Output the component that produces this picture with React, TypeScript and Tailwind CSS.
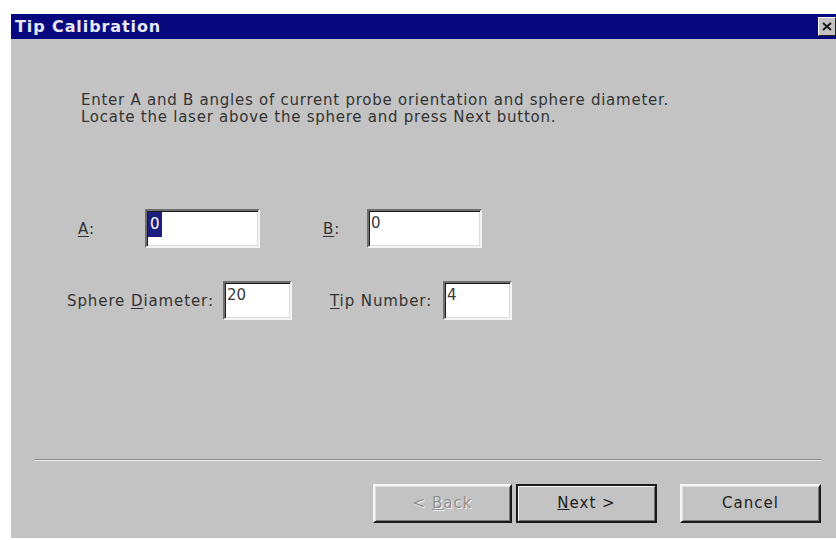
const face = "font-['DejaVu_Sans',Verdana,sans-serif]";

// Win95-style sunken edit box
function EditBox({
  value,
  width,
  selected = false,
}: {
  value: string;
  width: string;
  selected?: boolean;
}) {
  return (
    <div
      className={`${width} h-[39px] bg-white border-2 border-t-[#6f6f6f] border-l-[#6f6f6f] border-b-[#f4f4f4] border-r-[#f4f4f4] shadow-[inset_1px_1px_0_#1c1c1c,inset_-1px_-1px_0_#dcdcdc] px-[1px] pt-[1px] text-[15px] leading-[22px] text-[#3a3a3a]`}
    >
      {selected ? (
        <span className="inline-block bg-[#1e1e80] px-[2px] leading-[25px] text-white">{value}</span>
      ) : (
        <span className="pl-[1px]">{value}</span>
      )}
    </div>
  );
}

function Label({ pre = "", hot, post }: { pre?: string; hot: string; post: string }) {
  return (
    <span className="whitespace-nowrap text-[15px] tracking-[0.9px] text-[#333]">
      {pre}
      <span className="underline underline-offset-2">{hot}</span>
      {post}
    </span>
  );
}

function Button({
  children,
  width,
  primary = false,
}: {
  children: React.ReactNode;
  width: string;
  primary?: boolean;
}) {
  const edge = primary
    ? "border-2 border-[#1a1a1a] shadow-[inset_1px_1px_0_#fafafa,inset_-1px_-1px_0_#6a6a6a]"
    : "border-2 border-t-[#f6f6f6] border-l-[#f6f6f6] border-b-[#1a1a1a] border-r-[#1a1a1a] shadow-[inset_1px_1px_0_#dedede,inset_-1px_-1px_0_#7a7a7a]";
  return (
    <div
      className={`${width} h-[39px] ${edge} bg-[#c3c3c3] flex items-center justify-center text-[15px] tracking-[1px]`}
    >
      {children}
    </div>
  );
}

export default function App() {
  return (
    <div className={`w-[836px] h-[540px] bg-white pt-[14px] pl-[11px] pb-[2px] flex ${face}`}>
      <div className="flex-1 flex flex-col bg-[#c3c3c3] overflow-hidden">
        {/* caption bar */}
        <div className="h-[25px] bg-[#08087e] flex items-center justify-between pl-[4px]">
          <span className="text-[16px] font-bold tracking-[0.9px] text-[#e8e8f4] leading-none">
            Tip Calibration
          </span>
          <div className="w-[18px] h-[19px] bg-[#c3c3c3] border border-t-white border-l-white border-b-[#222] border-r-[#222] flex items-center justify-center">
            <svg width="10" height="9" viewBox="0 0 10 9">
              <path d="M1 1 L9 8 M9 1 L1 8" stroke="#1a1a1a" strokeWidth="2" />
            </svg>
          </div>
        </div>

        <div className="flex flex-col">
          {/* instructions */}
          <div className="mt-[53px] pl-[70px] text-[15px] leading-[17px] tracking-[0.75px] text-[#333]">
            <p>Enter A and B angles of current probe orientation and sphere diameter.</p>
            <p>Locate the laser above the sphere and press Next button.</p>
          </div>

          {/* A / B angles */}
          <div className="mt-[83px] flex items-center pl-[67px]">
            <div className="w-[67px]">
              <Label hot="A" post=":" />
            </div>
            <EditBox value="0" width="w-[115px]" selected />
            <div className="w-[63px]" />
            <div className="w-[44px]">
              <Label hot="B" post=":" />
            </div>
            <EditBox value="0" width="w-[115px]" />
          </div>

          {/* sphere / tip */}
          <div className="mt-[33px] flex items-center pl-[56px]">
            <div className="w-[156px]">
              <Label pre="Sphere " hot="D" post="iameter:" />
            </div>
            <EditBox value="20" width="w-[69px]" />
            <div className="w-[38px]" />
            <div className="w-[113px]">
              <Label hot="T" post="ip Number:" />
            </div>
            <EditBox value="4" width="w-[69px]" />
          </div>

          {/* etched divider */}
          <div className="mt-[139px] ml-[24px] w-[786px] h-[2px] border-t border-t-[#8a8a8a] border-b border-b-[#f2f2f2]" />

          {/* wizard buttons */}
          <div className="mt-[23px] flex pl-[362px]">
            <Button width="w-[139px]">
              <span className="text-[#8e8e8e] [text-shadow:1px_1px_0_#f4f4f4]">
                &lt; <span className="underline">B</span>ack
              </span>
            </Button>
            <div className="w-[4px]" />
            <Button width="w-[141px]" primary>
              <span className="text-[#222]">
                <span className="underline">N</span>ext &gt;
              </span>
            </Button>
            <div className="w-[23px]" />
            <Button width="w-[141px]">
              <span className="text-[#222]">Cancel</span>
            </Button>
          </div>
        </div>
      </div>
    </div>
  );
}
